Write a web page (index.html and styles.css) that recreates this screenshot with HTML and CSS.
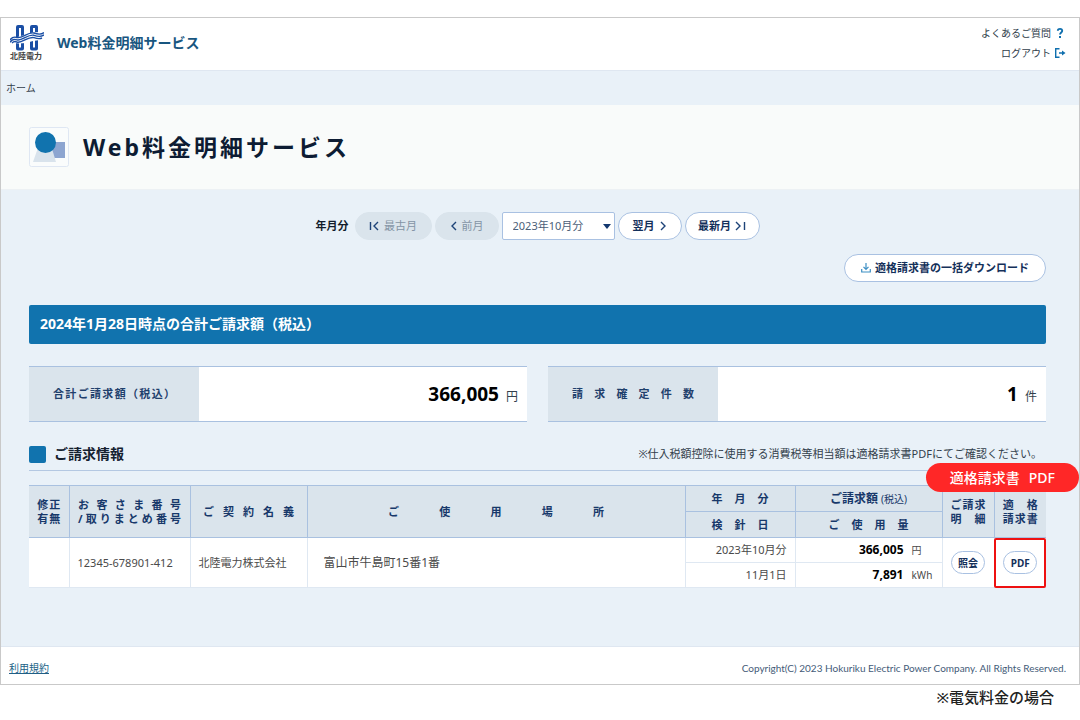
FILE: index.html
```html
<!DOCTYPE html>
<html lang="ja">
<head>
<meta charset="utf-8">
<meta name="viewport" content="width=device-width, initial-scale=1">
<title>Web料金明細サービス</title>
<link rel="stylesheet" href="styles.css">
</head>
<body>
<div class="frame">
  <header class="header">
    <div class="brand">
      <div class="logo">
        <svg class="logo-mark" viewBox="0 0 34 26" aria-hidden="true">
          <g fill="none" stroke="#1b4fa5" stroke-width="3">
            <rect x="7.5" y="1.5" width="5" height="22.500" rx="0.5"/>
            <rect x="21.5" y="1.5" width="5" height="22.500" rx="0.5"/>
          </g>
          <path d="M0 17.500 L3 13.500 L11 11 L18 9 L24 7 L34 7.500 V11 L30 15 L23 16 L16 18 L9 18.500 L0 17.500Z" fill="#fff"/>
          <g fill="none" stroke="#1b4fa5" stroke-width="1.4">
            <path d="M0 15 C2 12 4 11.500 7 12.500 C12 14 18 6.500 24 8 C28 9.500 31 10 34 7.500"/>
            <path d="M0 17.300 C2 14.300 4 13.800 7 14.800 C12 16.300 18 8.800 24 10.300 C28 11.800 31 12.300 34 9.800"/>
            <path d="M2 18 C4 16 5 16.100 7 17.100 C12 18.600 18 11.100 24 12.600 C28 14.100 30 14 32 13"/>
          </g>
        </svg>
        <span class="logo-name">北陸電力</span>
      </div>
      <span class="service-name">Web料金明細サービス</span>
    </div>
    <nav class="utility">
      <a href="#">よくあるご質問<svg class="utility-icon" viewBox="0 0 12 12" aria-hidden="true"><path d="M3.8 3.8 C3.8 1.2 8.2 1.2 8.2 3.8 C8.2 5.4 6 5.5 6 7.6" fill="none" stroke="#0f6fae" stroke-width="1.9"/><rect x="5" y="9" width="2" height="2" fill="#0f6fae"/></svg></a>
      <a href="#">ログアウト<svg class="utility-icon" viewBox="0 0 12 12" aria-hidden="true"><path d="M5.500 1.800 H1.700 V10.200 H5.500 M5 6 H10" fill="none" stroke="#0f6fae" stroke-width="1.4"/><path d="M8 3.500 L11.500 6 L8 8.500Z" fill="#0f6fae"/></svg></a>
    </nav>
  </header>
  <nav class="breadcrumb">ホーム</nav>
  <div class="title-band">
    <svg class="title-icon" viewBox="0 0 40 40" aria-hidden="true">
      <rect x="0.5" y="0.5" width="39" height="39" rx="2" fill="#fafcfc" stroke="#dfe7f3"/>
      <rect x="21" y="15" width="15" height="16" fill="#8da5d0"/>
      <path d="M11 15 H21 L27 35 H4Z" fill="#d9e3ec"/>
      <circle cx="16.500" cy="15.500" r="10.500" fill="#1173ae"/>
    </svg>
    <h1 class="title">Web料金明細サービス</h1>
  </div>
  <main class="content">
    <form class="months">
      <label class="months-label" for="month">年月分</label>
      <button type="button" class="pill pill-first" disabled><svg class="arrow arrow-wide" viewBox="0 0 11 10" aria-hidden="true"><path d="M1.500 1 V9 M9 1 L5 5 L9 9"/></svg>最古月</button>
      <button type="button" class="pill pill-step" disabled><svg class="arrow" viewBox="0 0 8 10" aria-hidden="true"><path d="M6 1 L2 5 L6 9"/></svg>前月</button>
      <span class="select-wrap">
        <select id="month" class="month-select"><option>2023年10月分</option></select>
        <svg class="caret" viewBox="0 0 8 5" aria-hidden="true"><path d="M0 0 H8 L4 5Z" fill="#13386f"/></svg>
      </span>
      <button type="button" class="pill pill-step">翌月<svg class="arrow" viewBox="0 0 8 10" aria-hidden="true"><path d="M2 1 L6 5 L2 9"/></svg></button>
      <button type="button" class="pill pill-last">最新月<svg class="arrow arrow-wide" viewBox="0 0 11 10" aria-hidden="true"><path d="M1 1 L5 5 L1 9 M9.500 1 V9"/></svg></button>
    </form>
    <div class="download-row">
      <button type="button" class="pill pill-download"><svg class="download-icon" viewBox="0 0 10 10" aria-hidden="true"><path d="M5 0 V6 M2.500 3.800 L5 6.300 L7.500 3.800 M0.700 6 V9 H9.300 V6"/></svg>適格請求書の一括ダウンロード</button>
    </div>
    <h2 class="banner">2024年1月28日時点の合計ご請求額（税込）</h2>
    <div class="summary">
      <dl class="total">
        <dt class="total-name"><span>合計ご請求額（税込）</span></dt>
        <dd class="total-value"><strong>366,005</strong><span class="unit">円</span></dd>
      </dl>
      <dl class="total">
        <dt class="total-name"><span>請求確定件数</span></dt>
        <dd class="total-value"><strong>1</strong><span class="unit">件</span></dd>
      </dl>
    </div>
    <section class="billing">
      <div class="section-head">
        <h2 class="section-title">ご請求情報</h2>
        <p class="note">※仕入税額控除に使用する消費税等相当額は適格請求書PDFにてご確認ください。</p>
      </div>
      <div class="callout"><span>適格請求書</span><span>PDF</span></div>
      <table class="bills">
        <colgroup>
          <col class="c-fix"><col class="c-number"><col class="c-name"><col><col class="c-date"><col class="c-amount"><col class="c-action"><col class="c-action">
        </colgroup>
        <thead>
          <tr>
            <th rowspan="2"><span class="spread w-2">修正<br>有無</span></th>
            <th rowspan="2"><span class="spread w-number">お客さま番号<br>/取りまとめ番号</span></th>
            <th rowspan="2"><span class="spread w-name">ご契約名義</span></th>
            <th rowspan="2"><span class="spread w-place">ご使用場所</span></th>
            <th><span class="spread w-date">年月分</span></th>
            <th class="billed">ご請求額 <small class="tax">(税込)</small></th>
            <th rowspan="2"><span class="spread w-3">ご請求<br>明細</span></th>
            <th rowspan="2"><span class="spread w-3">適格<br>請求書</span></th>
          </tr>
          <tr>
            <th><span class="spread w-date">検針日</span></th>
            <th><span class="spread w-usage">ご使用量</span></th>
          </tr>
        </thead>
        <tbody>
          <tr>
            <td rowspan="2"></td>
            <td rowspan="2">12345-678901-412</td>
            <td rowspan="2">北陸電力株式会社</td>
            <td rowspan="2" class="place">富山市牛島町15番1番</td>
            <td class="num">2023年10月分</td>
            <td class="num"><span class="amount"><b>366,005</b><span class="amount-unit">円</span></span></td>
            <td rowspan="2" class="action"><button type="button" class="mini">照会</button></td>
            <td rowspan="2" class="action marked"><button type="button" class="mini">PDF</button></td>
          </tr>
          <tr>
            <td class="num">11月1日</td>
            <td class="num"><span class="amount"><b>7,891</b><span class="amount-unit">kWh</span></span></td>
          </tr>
        </tbody>
      </table>
    </section>
  </main>
  <footer class="footer">
    <a class="terms" href="#">利用規約</a>
    <small class="copyright">Copyright(C) 2023 Hokuriku Electric Power Company. All Rights Reserved.</small>
  </footer>
</div>
<p class="caption">※電気料金の場合</p>
</body>
</html>
```

FILE: styles.css
```css
* { box-sizing: border-box; }

body {
  margin: 0;
  padding-top: 17px;
  background: #fff;
  color: #333f4c;
  font-family: "Noto Sans", "Noto Sans CJK JP", sans-serif;
  font-size: 11px;
  line-height: 16px;
}

h1, h2, p, dl, dd { margin: 0; }
button, select { font: inherit; }

.frame {
  border: 1px solid #c9c9c9;
  background: #e9f1f8;
}

.header {
  display: flex;
  justify-content: space-between;
  height: 53px;
  padding: 7px 13px 0 9px;
  background: #fff;
  border-bottom: 1px solid #dfe7f1;
}
.brand { display: flex; gap: 13px; }
.logo { width: 34px; }
.logo-mark { display: block; width: 34px; height: 26px; }
.logo-name {
  display: block;
  color: #444;
  font-size: 8px;
  font-weight: 700;
  line-height: 10px;
  white-space: nowrap;
}
.service-name {
  padding-top: 8px;
  color: #185680;
  font-size: 14px;
  font-weight: 700;
  line-height: 20px;
}
.utility {
  display: flex;
  flex-direction: column;
  align-items: flex-end;
  gap: 4px;
}
.utility a {
  display: flex;
  align-items: center;
  gap: 3px;
  color: #2f3d4a;
  font-size: 10px;
  text-decoration: none;
}
.utility-icon { width: 12px; height: 12px; }

.breadcrumb {
  padding: 9px 5px;
  font-size: 10px;
}

.title-band {
  display: flex;
  align-items: center;
  gap: 14px;
  height: 85px;
  padding-left: 28px;
  background: #f9fbfa;
  border-bottom: 1px solid #edf1f4;
}
.title-icon { width: 40px; height: 40px; }
.title {
  color: #0d1c33;
  font-size: 23px;
  letter-spacing: 3px;
  line-height: 34px;
}

.content { padding: 22px 33px 58px 28px; }

.months {
  display: flex;
  align-items: center;
  justify-content: center;
  gap: 3px;
}
.months-label {
  margin-right: 3px;
  color: #111c2c;
  font-weight: 700;
}
.pill {
  display: flex;
  align-items: center;
  justify-content: center;
  gap: 4px;
  height: 28px;
  padding: 0;
  border: 1px solid #a9c1e2;
  border-radius: 14px;
  background: #fff;
  color: #14305a;
  font-weight: 700;
}
.pill:disabled {
  border-color: #dae4ec;
  background: #dae4ec;
  color: #8494a5;
  font-weight: 400;
}
.pill-first { width: 77px; }
.pill-step { width: 64px; }
.pill-last { width: 75px; }
.pill-download { padding: 0 16px; }
.arrow {
  width: 8px;
  height: 10px;
  fill: none;
  stroke: #1d4378;
  stroke-width: 1.4;
}
.arrow-wide { width: 11px; }
.select-wrap { position: relative; }
.month-select {
  display: block;
  width: 113px;
  height: 28px;
  padding: 0 10px;
  appearance: none;
  border: 1px solid #a9c1e2;
  border-radius: 2px;
  background: #fff;
  color: #4c6078;
}
.caret {
  position: absolute;
  top: 12px;
  right: 4px;
  width: 8px;
  height: 5px;
  pointer-events: none;
}

.download-row {
  display: flex;
  justify-content: flex-end;
  margin-top: 14px;
}
.download-icon {
  width: 10px;
  height: 10px;
  fill: none;
  stroke: #3d8fc4;
  stroke-width: 1.2;
}

.banner {
  margin-top: 23px;
  padding: 9px 11px 10px;
  border-radius: 2px;
  background: #1173ae;
  color: #fff;
  font-size: 14px;
  line-height: 20px;
}

.summary {
  display: grid;
  grid-template-columns: 1fr 1fr;
  gap: 21px;
  margin-top: 22px;
}
.total {
  display: flex;
  height: 56px;
  border-top: 1px solid #a9c1e0;
  border-bottom: 1px solid #a9c1e0;
  background: #fff;
}
.total-name {
  display: flex;
  flex: 0 0 170px;
  align-items: center;
  padding: 0 24px;
  background: #dae4ec;
  color: #1f406c;
  font-weight: 700;
}
.total-name span {
  flex: 1;
  text-align: justify;
  text-align-last: justify;
}
.total-value {
  display: flex;
  flex: 1;
  align-items: baseline;
  justify-content: flex-end;
  gap: 7px;
  padding: 14px 9px 0;
}
.total-value strong {
  color: #000;
  font-size: 19px;
  line-height: 26px;
}
.unit { font-size: 12px; }

.billing { position: relative; margin-top: 20px; }
.section-head {
  display: flex;
  align-items: center;
  justify-content: space-between;
  height: 29px;
  padding-bottom: 4px;
  border-bottom: 1px solid #b4c8e2;
}
.section-title {
  display: flex;
  align-items: center;
  gap: 8px;
  color: #14202f;
  font-size: 14px;
  line-height: 20px;
}
.section-title::before {
  content: "";
  width: 17px;
  height: 17px;
  border-radius: 2px;
  background: #1173ae;
}
.note { padding-right: 4px; }
.callout {
  position: absolute;
  top: 21px;
  right: -33px;
  display: flex;
  gap: 9px;
  padding: 0 24px;
  border-radius: 15px;
  background: #ff2727;
  color: #fff;
  font-size: 14px;
  font-weight: 500;
  line-height: 29px;
  white-space: nowrap;
}

.bills {
  width: 100%;
  margin-top: 14px;
  border-collapse: collapse;
  table-layout: fixed;
}
.c-fix { width: 40px; }
.c-number { width: 121px; }
.c-name { width: 117px; }
.c-date { width: 110px; }
.c-amount { width: 147px; }
.c-action { width: 52px; }
.bills th, .bills td {
  height: 26px;
  padding: 0 8px;
}
.bills th {
  padding: 0;
  border: 1px solid #a9c1e0;
  background: #dae4ec;
  color: #17386a;
  font-weight: 700;
  line-height: 14px;
}
.bills td {
  border: 1px solid #dfe8f2;
  background: #fff;
  color: #4a4a4a;
}
.bills tbody td { height: 25px; }
.bills th:first-child[rowspan], .bills td:first-child[rowspan] { border-left: 0; }
.bills th:last-child[rowspan], .bills td:last-child[rowspan] { border-right: 0; }
.bills .billed { font-size: 12px; }
.spread {
  display: block;
  margin: 0 auto;
  text-align: justify;
  text-align-last: justify;
}
.w-2 { width: 23px; }
.w-3 { width: 35px; }
.w-number { width: 103px; }
.w-name { width: 91px; }
.w-place { width: 216px; }
.w-date { width: 57px; }
.w-usage { width: 80px; }
.tax { font-size: 10px; font-weight: 400; }
.bills .place { padding-left: 16px; font-size: 12px; }
.bills .num { text-align: right; }
.amount {
  display: flex;
  align-items: baseline;
  justify-content: flex-end;
  gap: 8px;
}
.amount b { color: #000; font-size: 12px; }
.amount-unit { width: 22px; font-size: 10px; text-align: left; }
.bills .action { padding: 0; text-align: center; }
.mini {
  width: 34px;
  height: 23px;
  padding: 0;
  border: 1px solid #a9c1e2;
  border-radius: 12px;
  background: #fff;
  color: #14305a;
  font-size: 10px;
  font-weight: 700;
  line-height: 16px;
}
.marked {
  border-radius: 2px;
  outline: 2px solid #ee1111;
  outline-offset: -2px;
}

.footer {
  display: flex;
  align-items: center;
  justify-content: space-between;
  height: 38px;
  padding: 5px 13px 0 8px;
  background: #fff;
  border-top: 1px solid #dfe7f1;
}
.terms { color: #205f86; font-size: 10px; }
.copyright {
  color: #445b78;
  font-family: Lato, "Noto Sans", sans-serif;
  font-size: 10px;
}

.caption {
  padding: 2px 26px 0 0;
  color: #222;
  font-size: 15px;
  font-weight: 500;
  line-height: 20px;
  text-align: right;
}
```
